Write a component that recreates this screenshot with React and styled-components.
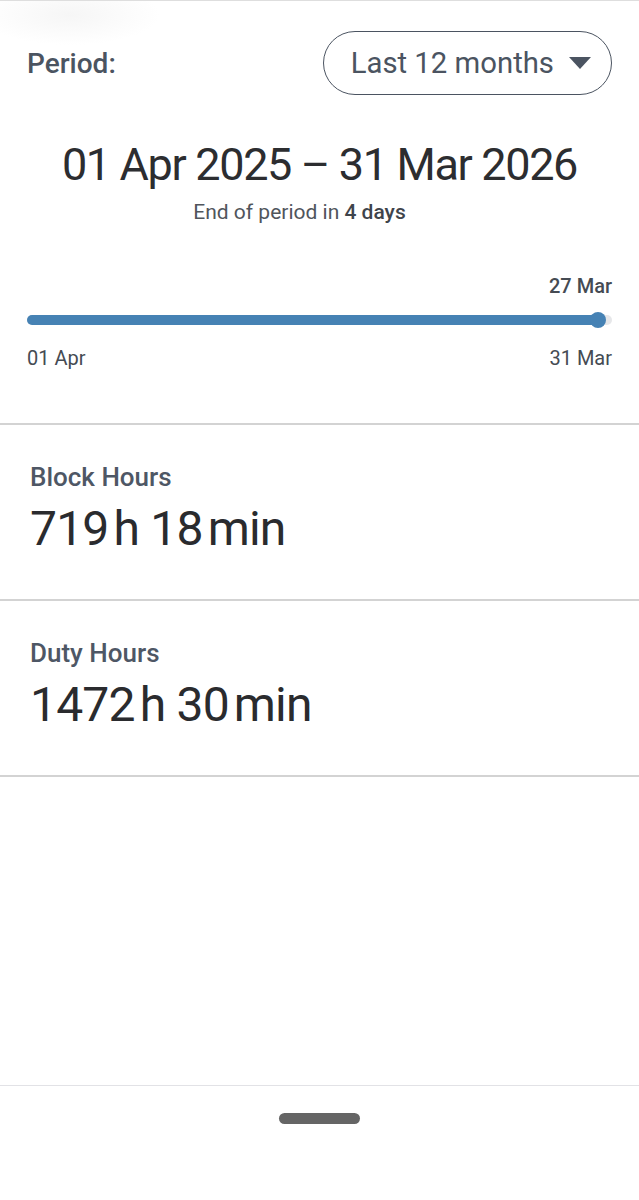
import styled, { createGlobalStyle } from 'styled-components';

const GlobalStyle = createGlobalStyle`
  html, body {
    margin: 0;
    padding: 0;
    background: #ffffff;
  }
  body {
    font-family: Roboto, "Noto Sans", "Liberation Sans", sans-serif;
    -webkit-font-smoothing: antialiased;
  }
`

const Screen = styled.div`
  display: flex;
  flex-direction: column;
  height: 100vh;
  border-top: 1px solid #dedede;
  box-sizing: border-box;
`

const Content = styled.div`
  flex: 1;
`

const Header = styled.section`
  padding: 30px 27px 0 27px;
  background: radial-gradient(ellipse 90px 30px at 70px 14px, #f6f6f6, rgba(255,255,255,0));
`

const PeriodRow = styled.div`
  display: flex;
  align-items: center;
  justify-content: space-between;
`

const PeriodLabel = styled.span`
  font-size: 28px;
  font-weight: 500;
  color: #4b5461;
`

const Dropdown = styled.button`
  display: flex;
  align-items: center;
  gap: 15px;
  height: 64px;
  padding: 0 20px 0 27px;
  border: 1.5px solid #4b5461;
  border-radius: 32px;
  background: #fff;
  font-family: inherit;
  font-size: 29.3px;
  color: #4b5461;
  cursor: pointer;
`

const DateRange = styled.div`
  margin-top: 47px;
  text-align: center;
  font-size: 45px;
  line-height: 45px;
  letter-spacing: -1.35px;
  color: #2c2d30;
`

const Remaining = styled.div`
  margin-top: 14px;
  padding-right: 40px;
  text-align: center;
  font-size: 21px;
  line-height: 22px;
  color: #50555c;

  b {
    font-weight: 500;
    color: #3f444b;
  }
`

const Progress = styled.div`
  margin-top: 52px;
  padding-bottom: 54px;
`

const ProgressLabels = styled.div`
  display: flex;
  justify-content: ${props => props.end ? 'flex-end' : 'space-between'};
  font-size: 20px;
  line-height: 22px;
  color: #454b53;
  font-weight: ${props => props.bold ? 500 : 400};
`

const Track = styled.div`
  position: relative;
  height: 10px;
  margin: 18px 0 22px;
  border-radius: 5px;
  background: #e6e7e9;
`

const Fill = styled.div`
  height: 100%;
  border-radius: 5px;
  background: #4682b4;
`

const Thumb = styled.div`
  position: absolute;
  top: 50%;
  width: 16px;
  height: 16px;
  margin: -8px 0 0 -8px;
  border-radius: 50%;
  background: #4682b4;
`

const Stat = styled.section`
  border-top: 2px solid #d3d3d3;
  padding: 38px 30px 46px;

  &:last-child {
    border-bottom: 2px solid #d3d3d3;
  }
`

const StatLabel = styled.div`
  font-size: 26px;
  line-height: 28px;
  font-weight: 500;
  color: #4e5765;
`

const StatValue = styled.div`
  margin-top: 14px;
  font-size: 48px;
  line-height: 48px;
  letter-spacing: -0.8px;
  color: #2a2b2e;
`

const Unit = styled.span`
  margin-left: 5px;
`

const Stats = styled.div``

const NavBar = styled.div`
  display: flex;
  justify-content: center;
  height: 115px;
  border-top: 1.5px solid #e2e2e6;
  box-sizing: border-box;
`

const Handle = styled.div`
  width: 81px;
  height: 11px;
  margin-top: 27px;
  border-radius: 6px;
  background: #656565;
`

function Caret() {
  return (
    <svg width="22" height="13" viewBox="0 0 22 13">
      <path d="M0 0 H22 L11 12 Z" fill="#4b5461" />
    </svg>
  )
}

function Duration({ hours, minutes }) {
  return (
    <StatValue>
      {hours}<Unit>h</Unit> {minutes}<Unit>min</Unit>
    </StatValue>
  )
}

export default function App() {
  const progress = 97.6; // 27 Mar within 01 Apr – 31 Mar
  return (
    <>
      <GlobalStyle />
      <Screen>
        <Content>
          <Header>
            <PeriodRow>
              <PeriodLabel>Period:</PeriodLabel>
              <Dropdown>
                Last 12 months
                <Caret />
              </Dropdown>
            </PeriodRow>
            <DateRange>01 Apr 2025 – 31 Mar 2026</DateRange>
            <Remaining>End of period in <b>4 days</b></Remaining>
            <Progress>
              <ProgressLabels end bold>27 Mar</ProgressLabels>
              <Track>
                <Fill style={{ width: `${progress}%` }} />
                <Thumb style={{ left: `${progress}%` }} />
              </Track>
              <ProgressLabels>
                <span>01 Apr</span>
                <span>31 Mar</span>
              </ProgressLabels>
            </Progress>
          </Header>
          <Stats>
            <Stat>
              <StatLabel>Block Hours</StatLabel>
              <Duration hours={719} minutes={18} />
            </Stat>
            <Stat>
              <StatLabel>Duty Hours</StatLabel>
              <Duration hours={1472} minutes={30} />
            </Stat>
          </Stats>
        </Content>
        <NavBar>
          <Handle />
        </NavBar>
      </Screen>
    </>
  )
}
